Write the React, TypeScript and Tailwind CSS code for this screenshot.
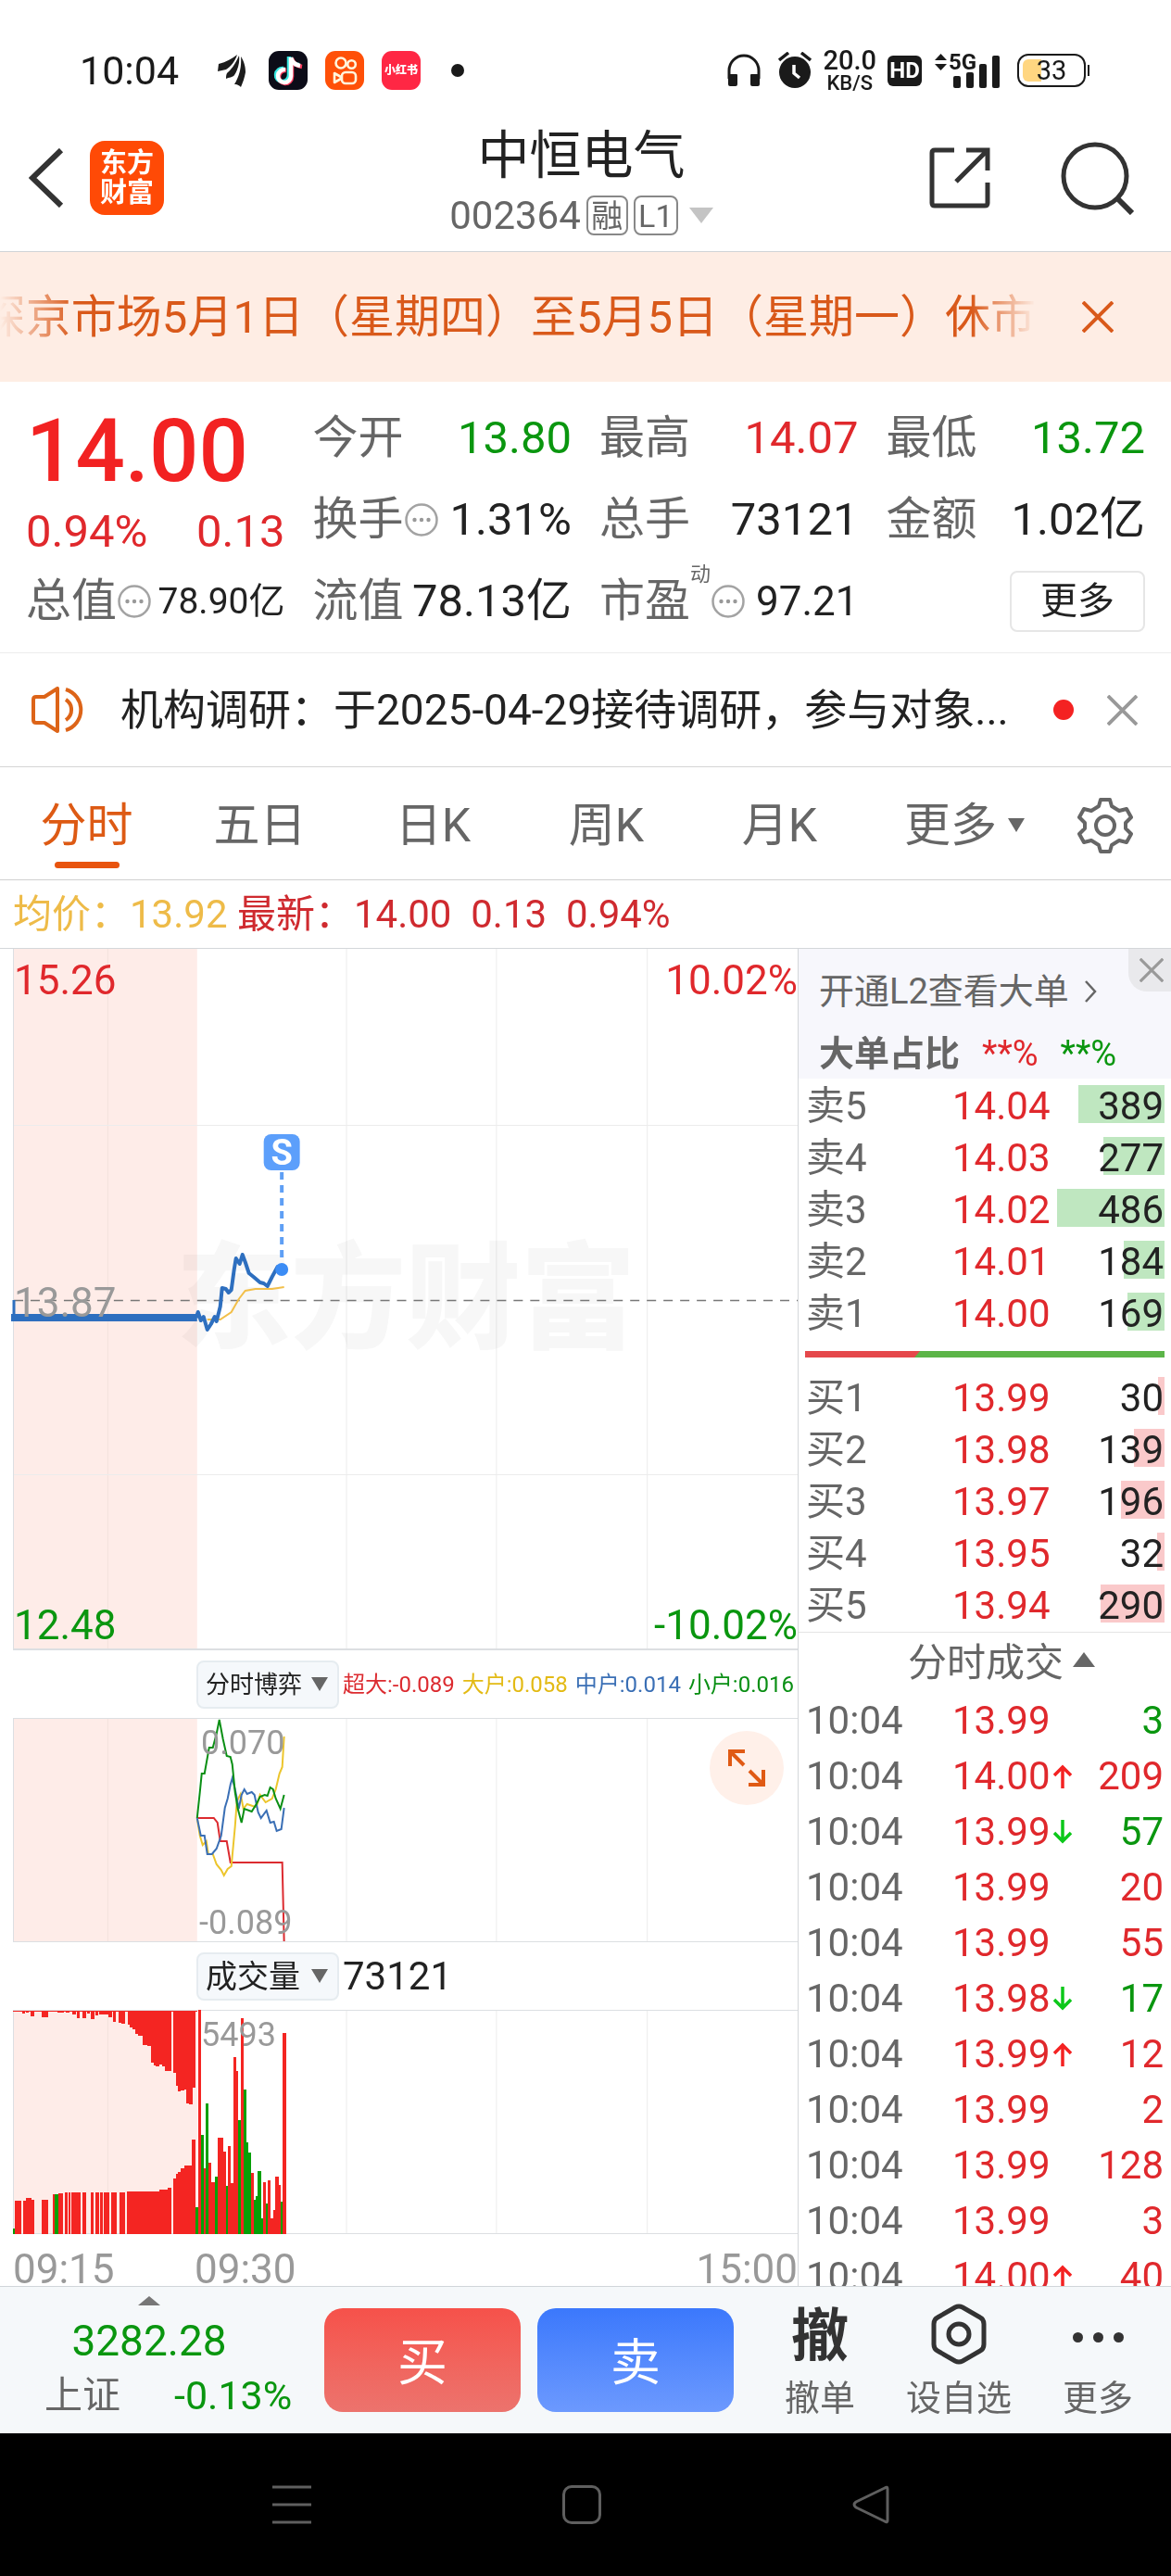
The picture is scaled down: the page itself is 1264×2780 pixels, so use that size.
import { clsx } from 'clsx'

const sells = [
  { label: '卖5', price: '14.04', volume: 389 },
  { label: '卖4', price: '14.03', volume: 277 },
  { label: '卖3', price: '14.02', volume: 486 },
  { label: '卖2', price: '14.01', volume: 184 },
  { label: '卖1', price: '14.00', volume: 169 },
]

const buys = [
  { label: '买1', price: '13.99', volume: 30 },
  { label: '买2', price: '13.98', volume: 139 },
  { label: '买3', price: '13.97', volume: 196 },
  { label: '买4', price: '13.95', volume: 32 },
  { label: '买5', price: '13.94', volume: 290 },
]

const trades = [
  { price: '13.99', volume: 3, side: 'sell' },
  { price: '14.00', volume: 209, side: 'buy', move: 'up' },
  { price: '13.99', volume: 57, side: 'sell', move: 'down' },
  { price: '13.99', volume: 20, side: 'buy' },
  { price: '13.99', volume: 55, side: 'buy' },
  { price: '13.98', volume: 17, side: 'sell', move: 'down' },
  { price: '13.99', volume: 12, side: 'buy', move: 'up' },
  { price: '13.99', volume: 2, side: 'buy' },
  { price: '13.99', volume: 128, side: 'buy' },
  { price: '13.99', volume: 3, side: 'buy' },
  { price: '14.00', volume: 40, side: 'buy', move: 'up' },
]

const RED = '#f42522'
const GREEN = '#06a006'

// x, width, height of the bars that hang from the top before the open
const auctionTop = [
  [23, 3, 3], [27, 3, 2], [32, 4, 6], [44, 7, 7], [61, 7, 2], [70, 4, 2], [77, 4, 4], [82, 3, 8],
  [88, 4, 8], [93, 3, 3], [97, 4, 9], [102, 3, 5], [106, 10, 4], [116, 4, 7], [121, 3, 12],
  [127, 3, 13], [130, 4, 14], [137, 2, 15], [139, 3, 18], [142, 3, 20], [145, 3, 25], [148, 5, 27],
  [153, 5, 37], [158, 4, 38], [162, 3, 56], [165, 2, 59], [167, 4, 60], [171, 3, 58], [174, 3, 60],
  [177, 7, 65], [186, 3, 67], [189, 2, 81], [191, 3, 87], [194, 4, 86], [198, 2, 85], [200, 3, 100],
  [203, 4, 101], [207, 3, 83],
]

// x, width, height of the bars that stand on the base line before the open
const auctionBottom = [
  [15, 7, 36], [24, 3, 36], [27, 6, 39], [33, 3, 37], [44, 7, 37], [56, 2, 43], [62, 5, 44],
  [69, 3, 45], [73, 2, 45], [76, 10, 45], [88, 4, 45], [97, 3, 45], [102, 4, 45], [107, 3, 45],
  [111, 6, 45], [119, 6, 45], [128, 6, 45], [136, 35, 46], [171, 9, 48], [180, 4, 50], [186, 3, 60],
  [189, 2, 65], [191, 3, 67], [194, 4, 71], [198, 8, 74], [206, 4, 102],
]

const session: [number, number, number, string][] = [
  [13, 2, 6, GREEN], [58, 4, 43, GREEN], [210, 3, 29, GREEN],
  [213, 3, 242, RED], [216, 3, 107, GREEN], [219, 2, 71, RED], [221, 3, 141, GREEN], [224, 3, 77, RED],
  [227, 4, 56, RED], [231, 3, 62, GREEN], [234, 6, 104, RED], [240, 3, 89, RED], [243, 2, 52, GREEN],
  [245, 3, 95, RED], [248, 3, 55, RED], [251, 3, 191, RED], [254, 2, 176, RED], [256, 3, 123, GREEN],
  [259, 3, 233, RED], [262, 3, 156, GREEN], [265, 2, 99, GREEN], [267, 3, 88, GREEN], [270, 3, 66, RED],
  [273, 2, 37, GREEN], [275, 2, 41, GREEN], [277, 4, 68, GREEN], [281, 2, 17, GREEN], [283, 3, 56, RED],
  [286, 2, 33, GREEN], [288, 3, 58, RED], [291, 3, 17, RED], [294, 2, 26, RED], [296, 4, 62, RED],
  [300, 2, 53, RED], [302, 2, 35, GREEN], [304, 4, 217, RED],
]

function Triangle({ up, className }: { up?: boolean; className: string }) {
  return (
    <svg viewBox="0 0 20 14" preserveAspectRatio="none" className={className} fill="currentColor" aria-hidden="true">
      <path d={up ? 'M10 0 20 14H0z' : 'M0 0h20L10 14z'} />
    </svg>
  )
}

function Cross({ className }: { className: string }) {
  return (
    <svg viewBox="0 0 34 34" className={className} fill="none" stroke="currentColor" strokeWidth="4" aria-hidden="true">
      <path d="M1 1l32 32M33 1L1 33" />
    </svg>
  )
}

function InfoDots() {
  return (
    <svg viewBox="0 0 38 38" className="size-[38px] shrink-0" aria-hidden="true">
      <circle cx="19" cy="19" r="16.500" fill="none" stroke="#a3a3a3" strokeWidth="2.500" />
      <circle cx="11.500" cy="19" r="2.200" fill="#999" />
      <circle cx="19" cy="19" r="2.200" fill="#999" />
      <circle cx="26.500" cy="19" r="2.200" fill="#999" />
    </svg>
  )
}

function StatusBar() {
  return (
    <div className="flex h-28 items-center justify-between pt-10 pr-[88px] pl-[86px] text-[#1a1a1a]">
      <div className="flex items-center">
        <span className="text-[43px] leading-none">10:04</span>
        <svg viewBox="0 0 30 36" className="ml-[42px] h-9 w-[30px]" fill="#1c1c1c" aria-hidden="true">
          <path d="M0 19 1 11C9 9 16 5 21 1c-2 7-7 13-12 16-3 1-6 1-9 2z" />
          <path d="M9 27c0-2 0-4 1-6C16 16 20 9 23 2c1 7-1 15-5 21-2 3-6 2-9 4z" />
          <path d="M18 33c5-8 8-18 7-30 4 6 5 12 5 17-1 6-3 11-5 16-2-2-4-3-7-3z" />
        </svg>
        <svg viewBox="0 0 42 42" className="ml-[25px] size-[42px]" aria-hidden="true">
          <rect width="42" height="42" rx="11" fill="#0c0c18" />
          <g fill="none" strokeWidth="4.500">
            <path d="M22 6v20a7 7 0 1 1-6-7M22 7c1 5 5 8 11 8" stroke="#35e6e0" />
            <path d="M25 8v20a7 7 0 1 1-6-7M25 8c1 5 5 8 11 9" stroke="#fb3a5c" />
            <path d="M24 7v20a7 7 0 1 1-6-7M24 7c1 5 5 8 10 9" stroke="#fff" />
          </g>
        </svg>
        <svg viewBox="0 0 42 42" className="ml-[19px] size-[42px]" aria-hidden="true">
          <rect width="42" height="42" rx="11" fill="#ff5008" />
          <g fill="none" stroke="#fff5dd" strokeWidth="2.600">
            <circle cx="17" cy="13" r="5.500" />
            <circle cx="28.500" cy="14.500" r="4.300" />
            <rect x="18" y="23" width="15" height="12" rx="4" />
            <path d="M17 28l-7-4v10l7-4z" strokeLinejoin="round" />
          </g>
        </svg>
        <span className="ml-[19px] flex size-[42px] items-center justify-center rounded-[11px] bg-[#ff2744] text-[12px] leading-none font-black text-white">
          小红书
        </span>
        <span className="ml-[33px] size-[14px] rounded-full bg-[#1a1a1a]" />
      </div>

      <div className="flex items-center">
        <svg viewBox="0 0 36 36" className="size-9" aria-hidden="true">
          <path d="M2 27V18a16 16 0 0 1 32 0v9" fill="none" stroke="#1a1a1a" strokeWidth="3" />
          <path d="M1 22h9q1 0 1 1v10q0 2-2 2H3q-2 0-2-2zM35 22h-9q-1 0-1 1v10q0 2 2 2h6q2 0 2-2z" fill="#1a1a1a" />
        </svg>
        <svg viewBox="0 0 36 40" className="ml-[19px] h-10 w-9" aria-hidden="true">
          <circle cx="18" cy="22" r="17" fill="#1a1a1a" />
          <path d="M1 9 11 1M25 1l10 8" stroke="#1a1a1a" strokeWidth="3.500" />
          <path d="M17 14v9l6 5" fill="none" stroke="#fff" strokeWidth="3.500" />
        </svg>
        <div className="ml-3 flex flex-col items-center font-medium">
          <span className="text-[29px] leading-[27px]">20.0</span>
          <span className="text-[22px] leading-[22px]">KB/S</span>
        </div>
        <span className="ml-3 flex h-[33px] w-[37px] items-center justify-center rounded-md bg-[#1a1a1a] text-[24px] leading-none font-bold text-white">
          HD
        </span>
        <svg viewBox="0 0 70 40" className="ml-[14px] h-10 w-[70px] overflow-visible" fill="#1a1a1a" aria-hidden="true">
          <path d="M0 9h13L6.500 2zM0 13h13l-6.500 7z" />
          <text x="15" y="19" fontSize="24" fontWeight="700" fontFamily="Roboto">5G</text>
          <rect x="20" y="26" width="8" height="13" rx="2" />
          <rect x="34" y="22" width="8" height="17" rx="2" />
          <rect x="48" y="13" width="8" height="26" rx="2" />
          <rect x="62" y="4" width="8" height="35" rx="2" />
        </svg>
        <div className="relative ml-[19px] flex h-9 w-[74px] items-center justify-center rounded-[12px] border-2 border-[#1a1a1a] text-[29px] leading-none">
          <span className="absolute inset-y-1 left-1 w-5 rounded-l-md bg-[#ffd681]" />
          <span className="relative">33</span>
        </div>
        <span className="ml-0.5 h-3 w-0.5 bg-[#1a1a1a]" />
      </div>
    </div>
  )
}

function Header() {
  return (
    <header className="grid h-40 grid-cols-[1fr_auto_1fr] items-center border-b border-[#d0d3d6] pr-[40px] pl-[31px] text-[#333]">
      <div className="flex items-center">
        <button type="button" aria-label="返回">
          <svg viewBox="0 0 38 64" className="h-16 w-[38px]" fill="none" stroke="currentColor" strokeWidth="6" aria-hidden="true">
            <path d="M35 2 4 32l31 30" />
          </svg>
        </button>
        <div className="ml-7 flex size-20 flex-col items-center justify-center rounded-2xl bg-[#ff4a06] text-[29px] leading-8 font-bold text-white">
          <span>东方</span>
          <span>财富</span>
        </div>
      </div>
      <div className="flex flex-col items-center gap-2.5 pt-1.5">
        <h1 className="text-[56px] leading-[66px] text-[#222]">中恒电气</h1>
        <div className="flex items-center text-[42px] leading-[44px] text-[#666]">
          <span>002364</span>
          <span className="ml-1.5 flex h-[43px] w-[45px] items-center justify-center rounded-lg border-2 border-[#888] text-[34px]">融</span>
          <span className="ml-1.5 flex h-[43px] w-[48px] items-center justify-center rounded-lg border-2 border-[#888] text-[34px]">L1</span>
          <Triangle className="ml-3 h-[17px] w-[26px] text-[#c4c4c4]" />
        </div>
      </div>
      <div className="flex items-center justify-end gap-[74px]">
        <button type="button" aria-label="分享">
          <svg viewBox="0 0 68 68" className="size-[68px]" fill="none" stroke="currentColor" strokeWidth="5" aria-hidden="true">
            <path d="M28 4H7Q4 4 4 7v54q0 3 3 3h54q3 0 3-3V39M41 4h23v22M63 5 30 38" />
          </svg>
        </button>
        <button type="button" aria-label="搜索">
          <svg viewBox="0 0 80 80" className="size-20" fill="none" stroke="currentColor" strokeWidth="5" aria-hidden="true">
            <circle cx="38" cy="38" r="34" />
            <path d="M62 62l16 16" strokeWidth="6" />
          </svg>
        </button>
      </div>
    </header>
  )
}

function Notice() {
  return (
    <div className="flex h-[140px] items-center bg-[#feede4] pr-[62px] text-[#d9591a]">
      <div className="flex min-w-0 flex-1 justify-end overflow-hidden pt-0.5 text-[49px] leading-[64px] whitespace-nowrap [mask-image:linear-gradient(to_right,transparent,black_80px,black_calc(100%_-_70px),transparent)]">
        <span>深京市场5月1日（星期四）至5月5日（星期一）休市</span>
      </div>
      <button type="button" aria-label="关闭公告" className="ml-[50px]">
        <Cross className="size-[34px]" />
      </button>
    </div>
  )
}

type StatProps = { label: string; value: string; tone?: string; info?: boolean; sup?: string; size?: string }

function Stat({ label, value, tone = 'text-[#222]', info, sup, size = 'text-[49px]' }: StatProps) {
  return (
    <div className="flex h-[88px] items-center justify-between whitespace-nowrap">
      <dt className="flex items-center text-[49px] leading-[60px] text-[#666]">
        {label}
        {sup && <sup className="mb-9 text-[22px] leading-6">{sup}</sup>}
        {info && <InfoDots />}
      </dt>
      <dd className={clsx('leading-[60px]', size, tone)}>{value}</dd>
    </div>
  )
}

function Quote() {
  const red = 'text-[#e0282c]'
  const green = 'text-[#0a960f]'
  return (
    <section className="border-b border-[#ececec] px-7 pt-[17px] pb-[11px]">
      <dl className="grid grid-cols-4 gap-x-[30px]">
        <div className="row-span-2 text-[#e0282c]">
          <div className="text-[94px] leading-[116px] font-medium text-[#f22222]">14.00</div>
          <div className="flex justify-between text-[49px] leading-[58px]">
            <span>0.94%</span>
            <span>0.13</span>
          </div>
        </div>
        <Stat label="今开" value="13.80" tone={green} />
        <Stat label="最高" value="14.07" tone={red} />
        <Stat label="最低" value="13.72" tone={green} />
        <Stat label="换手" value="1.31%" info />
        <Stat label="总手" value="73121" />
        <Stat label="金额" value="1.02亿" />
        <Stat label="总值" value="78.90亿" info size="text-[39px]" />
        <Stat label="流值" value="78.13亿" />
        <Stat label="市盈" value="97.21" sup="动" info size="text-[44px]" />
        <div className="flex h-[88px] items-center justify-end">
          <button type="button" className="h-[66px] w-[146px] rounded-lg border-2 border-[#e6e6e6] text-[40px] leading-none text-[#222]">
            更多
          </button>
        </div>
      </dl>
    </section>
  )
}

function News() {
  return (
    <div className="flex h-[123px] items-center border-b border-[#d4d4d4] pr-9 pl-[34px]">
      <svg viewBox="0 0 60 50" className="h-[50px] w-[60px] shrink-0" fill="none" stroke="#dd6418" strokeWidth="4" aria-hidden="true">
        <path d="M28 2v46L14 39H5q-3 0-3-3V14q0-3 3-3h9z" strokeLinejoin="round" />
        <path d="M37 14a13 13 0 0 1 0 22" />
        <path d="M37 3a23 23 0 0 1 0 44" />
      </svg>
      <p className="ml-9 min-w-0 flex-1 truncate text-[46px] leading-[64px] text-[#222]">
        机构调研：于2025-04-29接待调研，参与对象...
      </p>
      <span className="size-[22px] shrink-0 rounded-full bg-[#f42222]" />
      <button type="button" aria-label="关闭资讯" className="ml-[36px] text-[#999]">
        <Cross className="size-[33px]" />
      </button>
    </div>
  )
}

function Tabs() {
  return (
    <nav className="grid h-[122px] grid-cols-[repeat(6,1fr)_142px] items-center border-b border-[#d0d0d0] pt-1 text-[50px] leading-[64px] text-[#666]">
      <button type="button" className="relative text-[#dd5a14]">
        分时
        <span className="absolute inset-x-0 -bottom-3.5 mx-auto h-[7px] w-[70px] rounded-full bg-[#e8540e]" />
      </button>
      {['五日', '日K', '周K', '月K'].map((tab) => (
        <button type="button" key={tab}>{tab}</button>
      ))}
      <button type="button" className="flex items-center justify-end gap-3 pr-4">
        更多
        <Triangle className="h-[15px] w-[18px]" />
      </button>
      <button type="button" aria-label="设置" className="flex justify-center">
        <svg viewBox="0 0 60 60" className="size-[60px]" fill="none" stroke="currentColor" strokeWidth="4" aria-hidden="true">
          <path
            d="M25 2h10l2 7 8 5 8-2 5 9-6 6v6l6 6-5 9-8-2-8 5-2 7H25l-2-7-8-5-8 2-5-9 6-6v-6l-6-6 5-9 8 2 8-5z"
            strokeLinejoin="round"
          />
          <circle cx="30" cy="30" r="10" />
        </svg>
      </button>
    </nav>
  )
}

function Grid({ height }: { height: number }) {
  return (
    <>
      <rect x="14" y="0" width="198" height={height} fill="#feece8" />
      <path d={`M115.500 0V${height}`} stroke="#f3e2de" />
      <path d={`M373.500 0V${height}M535.500 0V${height}M698.500 0V${height}`} stroke="#ececec" />
    </>
  )
}

function PriceChart() {
  return (
    <div className="relative border-b-2 border-l border-[#dcdfe2] text-[44px] leading-[52px]">
      <span className="absolute inset-x-0 top-[319px] text-center text-[124px] leading-[120px] font-black text-[#f7f7f7]">
        东方财富
      </span>
      <svg viewBox="14 0 847 755" preserveAspectRatio="none" className="relative block h-[755px] w-full overflow-visible" fill="none">
        <g className="mix-blend-multiply">
          <Grid height={755} />
        </g>
        <path d="M14 190.500H861M14 567.500H861" stroke="#ececec" />
        <path d="M14 379.500H861" stroke="#777" strokeWidth="1.500" strokeDasharray="10 8" />
        <path
          d="M223 400L237 400 249 392 257 378 264 369 275 367 293 367 306 365"
          stroke="#f2bf4a"
          strokeWidth="2"
        />
        <path d="M14 379V398" stroke="#2e6fbf" strokeWidth="3" />
        <path d="M11 398H212" stroke="#2e6fbf" strokeWidth="8" />
        <path
          d="M211 398L213 392 216 401 219 397 223 411 227 405 231 397 233 402 237 386 239 366 243 367 246 371 249 368 252 346 254 334 258 340 261 330 264 338 268 350 273 354 280 360 284 361 288 364 293 354 299 343 304 343"
          stroke="#2e6fbf"
          strokeWidth="4"
          strokeLinejoin="round"
        />
        <path d="M303.500 241V334" stroke="#5f9ff5" strokeWidth="4" strokeDasharray="8 6" />
        <circle cx="303.500" cy="346" r="7" fill="#3b8cf5" />
        <rect x="284" y="200" width="39" height="39" rx="8" fill="#5c9ffb" />
        <text x="303.500" y="233" textAnchor="middle" fontSize="38" fontWeight="700" fontFamily="Roboto" fill="#fff">S</text>
      </svg>
      <span className="absolute top-2 left-0 text-[#e0282c]">15.26</span>
      <span className="absolute top-2 right-0 text-[#e0282c]">10.02%</span>
      <span className="absolute top-[356px] left-0 text-[#999]">13.87</span>
      <span className="absolute top-[704px] left-0 text-[#0a960f]">12.48</span>
      <span className="absolute top-[704px] right-0 text-[#0a960f]">-10.02%</span>
    </div>
  )
}

function IndicatorPicker({ name, size }: { name: string; size: string }) {
  return (
    <button
      type="button"
      className={clsx(
        'flex h-[52px] w-[154px] shrink-0 items-center justify-between rounded-lg border-2 border-[#e6ecf0] bg-[#f5f8fb] pr-2.5 pl-2 leading-none whitespace-nowrap text-[#222]',
        size,
      )}
    >
      {name}
      <Triangle className="h-[15px] w-[18px] text-[#666]" />
    </button>
  )
}

function FlowChart() {
  return (
    <div className="relative border-y border-l border-[#dcdfe2] text-[36px] leading-[44px] text-[#999]">
      <svg viewBox="14 0 847 240" preserveAspectRatio="none" className="block h-60 w-full" fill="none" strokeWidth="2">
        <g strokeWidth="1">
          <Grid height={240} />
        </g>
        <path d="M212 107H230L234 112 237 132H244L248 155H304L306 240" stroke="#dc2b30" />
        <path
          d="M212 107L215 126 218 136 222 132 224 146H229L233 157 238 163 241 169 245 162 249 159 253 116 255 89 259 81 262 97 266 92 272 94 276 95 280 82 286 90 293 86 297 76 301 59 304 52 306 19"
          stroke="#ecc52c"
        />
        <path
          d="M212 107L216 126H220L223 146H228L233 140 238 126 242 96 245 86 248 71 250 64 253 76 255 86 257 97 260 82 263 76 266 81 271 79 274 82 278 101 281 107 287 99 291 112 295 111 298 121 303 119 306 96"
          stroke="#3a6fb5"
        />
        <path
          d="M212 107L215 79 217 59H220L225 31H229L233 16 236 1 240 22 244 40 248 41 250 49 253 79 256 97 260 112 263 97 271 100 276 92 280 84 285 82 288 83 291 74 294 76 297 86 302 97 306 82"
          stroke="#0a8f14"
        />
      </svg>
      <span className="absolute top-1 left-[202px]">0.070</span>
      <span className="absolute top-[198px] left-[200px]">-0.089</span>
      <button
        type="button"
        aria-label="展开"
        className="absolute top-[13px] right-[15px] flex size-20 items-center justify-center rounded-full bg-[#fff0e9]"
      >
        <svg viewBox="0 0 40 40" className="size-10" fill="none" stroke="#e05a14" strokeWidth="4" aria-hidden="true">
          <path d="M2 18V2h16M3 3l14 14M38 22v16H22M37 37 23 23" />
        </svg>
      </button>
    </div>
  )
}

function VolumeChart() {
  return (
    <div className="relative border-y border-l border-[#dcdfe2] text-[36px] leading-[44px] text-[#999]">
      <svg viewBox="14 0 847 240" preserveAspectRatio="none" className="block h-60 w-full overflow-visible" shapeRendering="crispEdges">
        <Grid height={240} />
        <g fill={RED}>
          <rect x="13" y="0" width="199" height="1" />
          {auctionTop.map(([x, w, h]) => (
            <rect key={x} x={x} y="0" width={w} height={h} />
          ))}
          {auctionBottom.map(([x, w, h]) => (
            <rect key={x} x={x} y={241 - h} width={w} height={h} />
          ))}
        </g>
        {session.map(([x, w, h, fill]) => (
          <rect key={x} x={x} y={241 - h} width={w} height={h} fill={fill} />
        ))}
      </svg>
      <span className="absolute top-1 left-[202px]">5493</span>
    </div>
  )
}

function Charts() {
  return (
    <div className="min-w-0 flex-1 border-r border-[#d4d7da] pl-[14px]">
      <PriceChart />
      <div className="flex h-[73px] items-center pl-[198px]">
        <IndicatorPicker name="分时博弈" size="text-[26px]" />
        <div className="flex flex-1 justify-between pr-1 pl-1 text-[24px] leading-10 whitespace-nowrap">
          <span className="text-[#dc2b30]">超大:-0.089</span>
          <span className="text-[#e3ba14]">大户:0.058</span>
          <span className="text-[#3a6fb5]">中户:0.014</span>
          <span className="text-[#0a8f14]">小户:0.016</span>
        </div>
      </div>
      <FlowChart />
      <div className="flex h-[73px] items-center pl-[198px]">
        <IndicatorPicker name="成交量" size="text-[34px]" />
        <span className="ml-1 text-[42px] leading-[48px] text-[#222]">73121</span>
      </div>
      <VolumeChart />
      <div className="flex h-14 items-end text-[44px] leading-[36px] text-[#999]">
        <span className="w-[196px]">09:15</span>
        <span className="flex-1">09:30</span>
        <span>15:00</span>
      </div>
    </div>
  )
}

function BookTable({ rows, bar }: { rows: typeof sells; bar: string }) {
  return (
    <table className="w-full table-fixed text-[42px] leading-[56px]">
      <tbody>
        {rows.map((row) => (
          <tr key={row.label} className="h-14">
            <th scope="row" className="w-[166px] p-0 pl-2 text-left font-normal text-[#666]">{row.label}</th>
            <td className="w-[120px] p-0 text-[#e0282c]">{row.price}</td>
            <td className="relative p-0 pr-2 text-right text-[#222]">
              <span
                className={clsx('absolute top-[5px] right-[7px] h-[41px]', bar)}
                style={{ width: Math.round(row.volume * 0.239) }}
              />
              <span className="relative">{row.volume}</span>
            </td>
          </tr>
        ))}
      </tbody>
    </table>
  )
}

function OrderBook() {
  return (
    <aside className="w-[402px] shrink-0">
      <div className="relative h-[140px] bg-[#f7f7fc] pt-[18px] pl-[22px] text-[38px] text-[#666]">
        <a href="#l2" className="flex items-center leading-[56px]">
          开通L2查看大单
          <svg viewBox="0 0 14 26" className="ml-4 h-[26px] w-[14px]" fill="none" stroke="currentColor" strokeWidth="2.500" aria-hidden="true">
            <path d="M2 2l10 11L2 24" />
          </svg>
        </a>
        <div className="mt-[11px] flex items-center leading-[56px]">
          <span className="font-bold">大单占比</span>
          <span className="ml-6 text-[#e0282c]">**%</span>
          <span className="ml-6 text-[#0a960f]">**%</span>
        </div>
        <button
          type="button"
          aria-label="关闭"
          className="absolute top-0 right-0 flex h-[46px] w-[46px] items-center justify-center rounded-bl-[20px] bg-[#e9e9ec] pl-1 text-[#999]"
        >
          <Cross className="size-[26px]" />
        </button>
      </div>
      <div className="pt-0.5">
        <BookTable rows={sells} bar="bg-[#bfe7c0]" />
      </div>
      <svg viewBox="0 0 388 7" preserveAspectRatio="none" className="mt-3 mb-4 ml-[7px] block h-[7px] w-[388px]" aria-hidden="true">
        <rect width="388" height="7" fill="#5cb548" />
        <path d="M0 0h124l-6 7H0z" fill="#e5484b" />
      </svg>
      <BookTable rows={buys} bar="bg-[#fac9ca]" />
      <button
        type="button"
        className="flex h-[66px] w-full items-center border-t border-[#e4e4e4] pl-[118px] text-[42px] leading-[56px] text-[#666]"
      >
        分时成交
        <Triangle up className="mb-2 ml-2.5 h-4 w-6" />
      </button>
      <div className="h-[640px] overflow-hidden">
        <table className="w-full table-fixed text-[42px] leading-[60px]">
          <tbody>
            {trades.map((trade, i) => (
              <tr key={i} className="h-[60px]">
                <td className="w-[166px] p-0 pl-2 text-[#666]">10:04</td>
                <td className="w-[132px] p-0 text-[#e0282c]">
                  <span className="flex items-center gap-[3px]">
                    {trade.price}
                    {trade.move && (
                      <svg
                        viewBox="0 0 20 26"
                        className={clsx('h-[26px] w-5', trade.move === 'up' ? 'text-[#f42222]' : 'rotate-180 text-[#0cc81a]')}
                        fill="none"
                        stroke="currentColor"
                        strokeWidth="3.500"
                        aria-hidden="true"
                      >
                        <path d="M10 26V3M1 12l9-9 9 9" />
                      </svg>
                    )}
                  </span>
                </td>
                <td className={clsx('p-0 pr-2 text-right', trade.side === 'buy' ? 'text-[#e0282c]' : 'text-[#0a960f]')}>
                  {trade.volume}
                </td>
              </tr>
            ))}
          </tbody>
        </table>
      </div>
    </aside>
  )
}

function ActionBar() {
  return (
    <footer className="flex h-[159px] border-t border-[#d0d5d9] bg-[#f5f8fa] text-[#333]">
      <div className="mr-7 flex w-[322px] flex-col items-center pt-2.5">
        <Triangle up className="h-2.5 w-6 text-[#777]" />
        <div className="mt-2.5 text-[46px] leading-[56px] text-[#0a960f]">3282.28</div>
        <div className="mt-1.5 flex gap-[58px] self-start pl-12 leading-[50px] whitespace-nowrap">
          <span className="text-[41px] text-[#666]">上证</span>
          <span className="text-[43px] text-[#0a960f]">-0.13%</span>
        </div>
      </div>
      <div className="flex flex-1 gap-[18px] pt-[23px] text-[54px] leading-none text-white">
        <button type="button" className="h-28 flex-1 rounded-[20px] bg-linear-to-b from-[#f6514a] to-[#ec736d] pt-2">买</button>
        <button type="button" className="h-28 flex-1 rounded-[20px] bg-linear-to-b from-[#3b78fc] to-[#6c99fe] pt-2">卖</button>
      </div>
      <div className="mr-1 ml-[18px] flex w-[450px] pt-3.5 text-[38px] leading-[52px] text-[#666]">
        <button type="button" className="flex flex-1 flex-col items-center">
          <span className="flex h-[80px] items-center text-[62px] leading-none font-bold text-[#333]">撤</span>
          撤单
        </button>
        <button type="button" className="flex flex-1 flex-col items-center">
          <span className="flex h-[80px] items-center pb-1.5 text-[#333]">
            <svg viewBox="0 0 60 66" className="h-[66px] w-[60px]" fill="none" stroke="currentColor" strokeWidth="5" aria-hidden="true">
              <path d="M26 4q4-2 8 0l19 11q4 2 4 7v22q0 5-4 7L34 62q-4 2-8 0L7 51q-4-2-4-7V22q0-5 4-7z" />
              <circle cx="30" cy="33" r="11" />
            </svg>
          </span>
          设自选
        </button>
        <button type="button" className="flex flex-1 flex-col items-center">
          <span className="flex h-[80px] items-center gap-[11px]">
            <span className="size-[11px] rounded-full bg-[#333]" />
            <span className="size-[11px] rounded-full bg-[#333]" />
            <span className="size-[11px] rounded-full bg-[#333]" />
          </span>
          更多
        </button>
      </div>
    </footer>
  )
}

function SystemNav() {
  return (
    <div className="flex h-[154px] items-center justify-between bg-black pr-[304px] pl-[294px] text-[#5f5f5f]">
      <button type="button" aria-label="最近任务">
        <svg viewBox="0 0 42 42" className="size-[42px]" stroke="currentColor" strokeWidth="3" aria-hidden="true">
          <path d="M0 2h42M0 21h42M0 40h42" />
        </svg>
      </button>
      <button type="button" aria-label="主屏幕" className="size-[42px] rounded-[10px] border-3 border-current" />
      <button type="button" aria-label="返回上一页">
        <svg viewBox="0 0 40 42" className="h-[42px] w-10" fill="none" stroke="currentColor" strokeWidth="3" strokeLinejoin="round" aria-hidden="true">
          <path d="M38 4v34q0 3-3 1L4 24q-4-3 0-6L35 3q3-2 3 1z" />
        </svg>
      </button>
    </div>
  )
}

export default function App() {
  return (
    <div className="min-h-screen bg-white font-['Roboto','Noto_Sans_CJK_SC',sans-serif]">
      <StatusBar />
      <Header />
      <Notice />
      <Quote />
      <News />
      <Tabs />
      <div className="flex h-[74px] items-center border-b border-[#d4d7da] pl-[14px] text-[42px] leading-[56px] whitespace-pre">
        <span className="text-[#eebb48]">均价：13.92 </span>
        <span className="text-[#cf2a2f]">最新：14.00  0.13  0.94%</span>
      </div>
      <main className="flex">
        <Charts />
        <OrderBook />
      </main>
      <ActionBar />
      <SystemNav />
    </div>
  )
}
